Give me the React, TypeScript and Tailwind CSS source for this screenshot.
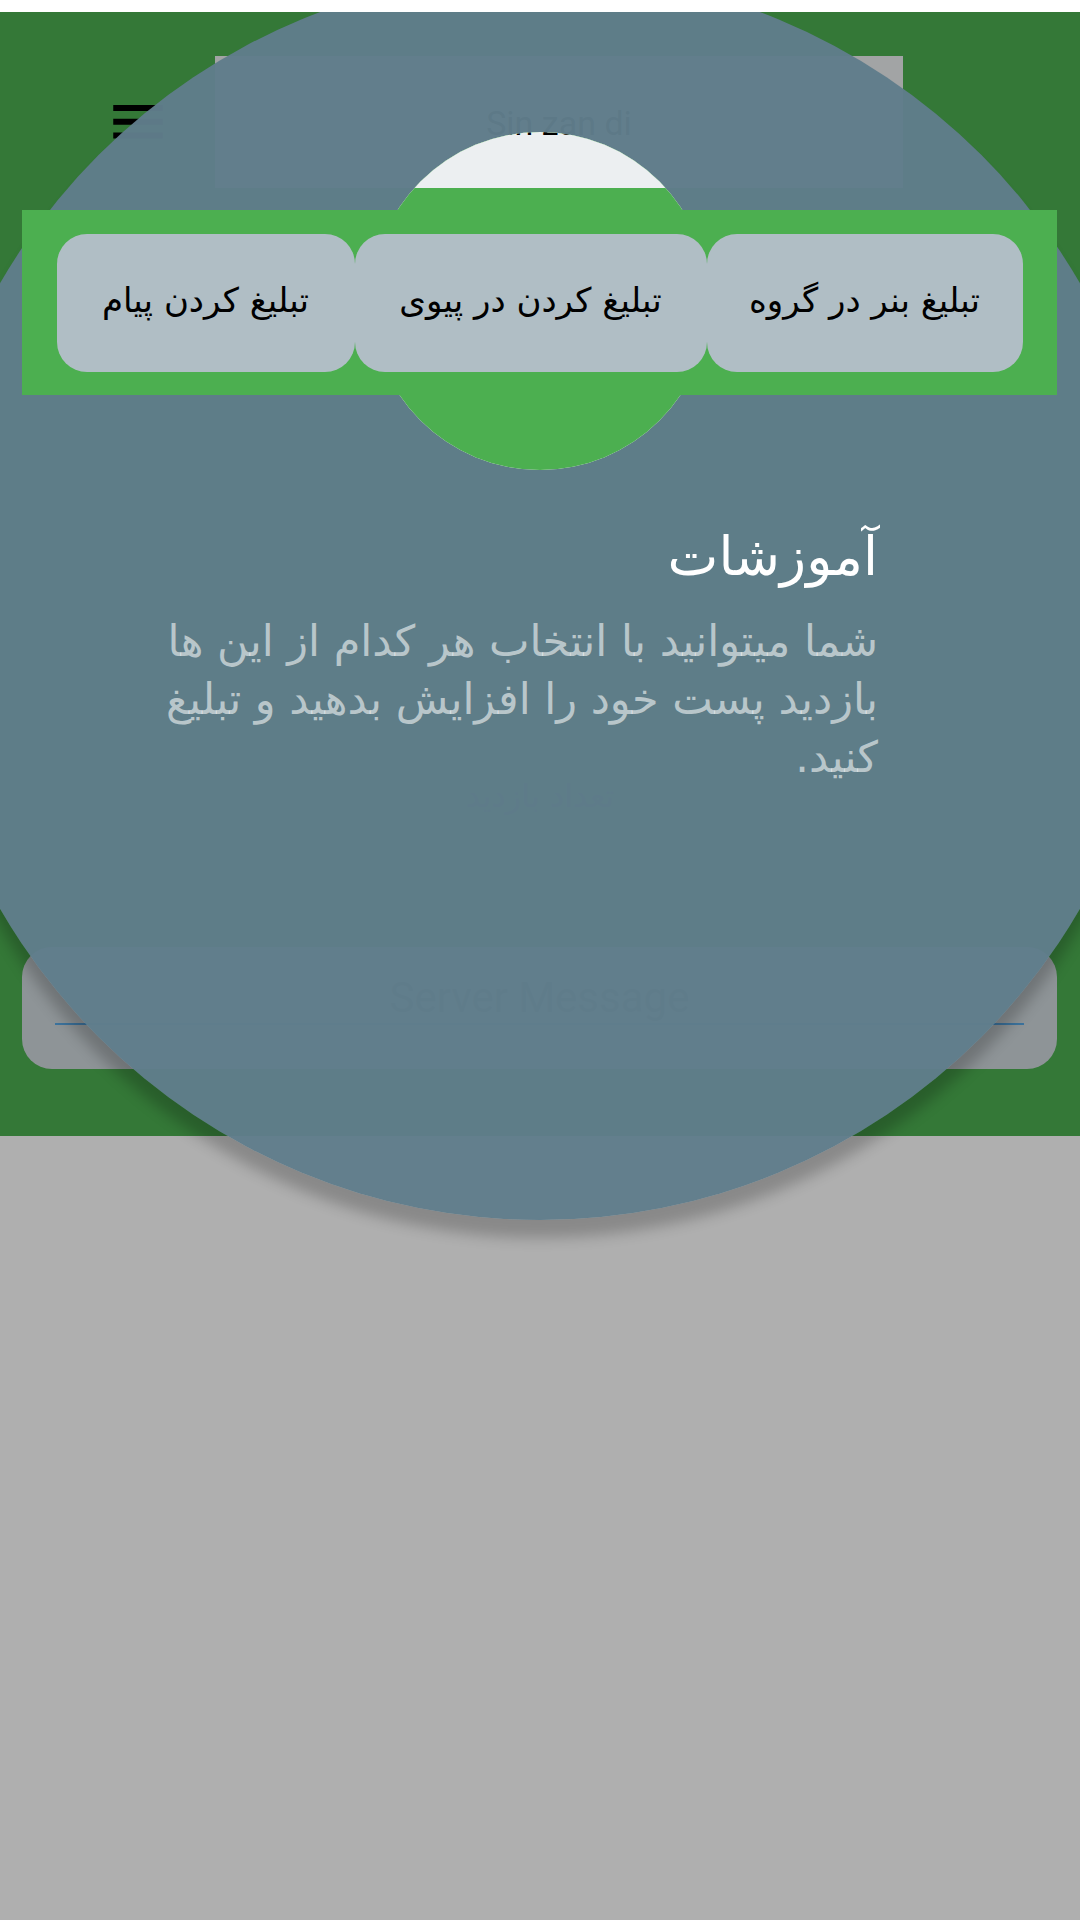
import React from 'react';

const fa = "font-['DejaVu_Sans','Noto_Sans',sans-serif]";
const latin = "font-['Roboto','Liberation_Sans',sans-serif]";

function MenuIcon() {
  return (
    <svg width="66" height="66" viewBox="0 0 24 24" fill="#000">
      <path d="M3 18h18v-2.2H3V18zm0-5h18v-2.2H3V13zm0-7.2V8h18V5.8H3z" />
    </svg>
  );
}

function PromoBar() {
  const buttons = [
    { label: 'تبلیغ بنر در گروه', w: 'w-[316px]' },
    { label: 'تبلیغ کردن در پیوی', w: 'w-[352px]' },
    { label: 'تبلیغ کردن پیام', w: 'w-[298px]' },
  ];
  return (
    <div dir="rtl" className="relative z-20 mt-[22px] ml-[22px] w-[1035px] h-[185px] bg-[#4caf50] flex items-center justify-center">
      {buttons.map((b) => (
        <div
          key={b.label}
          className={`${b.w} h-[138px] rounded-[30px] bg-[#b0bec5] flex items-center justify-center pb-[4px] text-[34px] text-black ${fa}`}
        >
          {b.label}
        </div>
      ))}
    </div>
  );
}

function Page() {
  return (
    <div className="w-[1080px] h-[1920px] bg-white flex flex-col">
      <div className="h-[12px] bg-white" />
      <div className="h-[1124px] bg-[#4caf50] flex flex-col">
        <div className="mt-[44px] h-[132px] flex items-center">
          <div className="ml-[105px] w-[66px] h-[66px]">
            <MenuIcon />
          </div>
          <div className="ml-[44px] w-[688px] h-[132px] bg-[#eceff1] flex items-center justify-center">
            <span className={`text-[34px] leading-none text-black mt-[2px] ${latin}`}>Sin zan di</span>
          </div>
        </div>

        <PromoBar />

        <div dir="rtl" className={`mt-[381px] h-[40px] text-center text-[32px] leading-[40px] text-[#455a64] ${fa}`}>
          تعداد بازدید
        </div>

        <div className="mt-[131px] ml-[22px] w-[1035px] h-[122px] rounded-[30px] bg-[#cfd8dc] pt-[26px] px-[33px]">
          <div className={`h-[50px] text-center text-[42px] leading-[50px] text-[#78848a] ${latin}`}>Server Message</div>
          <div className="h-[2px] bg-[#5aa9e6]" />
        </div>
      </div>
    </div>
  );
}

export default function App() {
  return (
    <div className="relative w-[1080px] h-[1920px] overflow-hidden">
      <Page />

      <div className="absolute left-0 top-[12px] w-[1080px] h-[1908px] overflow-hidden z-10 pointer-events-none">
        <div className="absolute inset-0 bg-black/[0.314]" />

        <div className="absolute left-[-84px] top-[-40px] w-[1248px] h-[1248px] rounded-full bg-[#607d8bf7] shadow-[0_18px_14px_rgba(0,0,0,0.22)]">
          <div className="absolute left-[455px] top-[160px] w-[338px] h-[338px] rounded-full overflow-hidden">
            <div className="absolute left-[-371px] top-[-132px]">
              <Page />
            </div>
          </div>
        </div>

        <div dir="rtl" className={`absolute left-[150px] top-[512px] w-[728px] text-right ${fa}`}>
          <div className="text-[54px] leading-[66px] text-white">آموزشات</div>
          <div className="mt-[22px] text-[43px] leading-[58px] text-white/[0.58]">
            <div>شما میتوانید با انتخاب هر کدام از این ها</div>
            <div>بازدید پست خود را افزایش بدهید و تبلیغ</div>
            <div>کنید.</div>
          </div>
        </div>
      </div>
    </div>
  );
}
